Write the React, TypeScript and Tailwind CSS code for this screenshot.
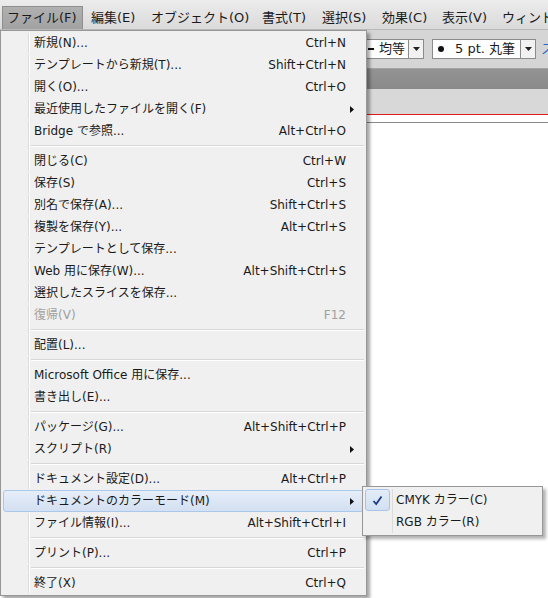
import React from 'react';

type Item = {
    label: string;
    shortcut?: string;
    sub?: boolean;
    disabled?: boolean;
    active?: boolean;
};

const groups: Item[][] = [
    [
        { label: '新規(N)...', shortcut: 'Ctrl+N' },
        { label: 'テンプレートから新規(T)...', shortcut: 'Shift+Ctrl+N' },
        { label: '開く(O)...', shortcut: 'Ctrl+O' },
        { label: '最近使用したファイルを開く(F)', sub: true },
        { label: 'Bridge で参照...', shortcut: 'Alt+Ctrl+O' },
    ],
    [
        { label: '閉じる(C)', shortcut: 'Ctrl+W' },
        { label: '保存(S)', shortcut: 'Ctrl+S' },
        { label: '別名で保存(A)...', shortcut: 'Shift+Ctrl+S' },
        { label: '複製を保存(Y)...', shortcut: 'Alt+Ctrl+S' },
        { label: 'テンプレートとして保存...' },
        { label: 'Web 用に保存(W)...', shortcut: 'Alt+Shift+Ctrl+S' },
        { label: '選択したスライスを保存...' },
        { label: '復帰(V)', shortcut: 'F12', disabled: true },
    ],
    [{ label: '配置(L)...' }],
    [
        { label: 'Microsoft Office 用に保存...' },
        { label: '書き出し(E)...' },
    ],
    [
        { label: 'パッケージ(G)...', shortcut: 'Alt+Shift+Ctrl+P' },
        { label: 'スクリプト(R)', sub: true },
    ],
    [
        { label: 'ドキュメント設定(D)...', shortcut: 'Alt+Ctrl+P' },
        { label: 'ドキュメントのカラーモード(M)', sub: true, active: true },
        { label: 'ファイル情報(I)...', shortcut: 'Alt+Shift+Ctrl+I' },
    ],
    [{ label: 'プリント(P)...', shortcut: 'Ctrl+P' }],
    [{ label: '終了(X)', shortcut: 'Ctrl+Q' }],
];

// label + column width in the menu bar
const menuBar: [string, string][] = [
    ['ファイル(F)', 'w-[84px]'],
    ['編集(E)', 'w-[60px]'],
    ['オブジェクト(O)', 'w-[111px]'],
    ['書式(T)', 'w-[60px]'],
    ['選択(S)', 'w-[60px]'],
    ['効果(C)', 'w-[60px]'],
    ['表示(V)', 'w-[60px]'],
    ['ウィンドウ(W)', 'w-[60px]'],
];

// Meiryo-like: Verdana-ish latin, CJK from Noto
const font = { fontFamily: '"DejaVu Sans", "Noto Sans CJK JP", sans-serif' };

function Arrow() {
    return (
        <svg width="4" height="7" viewBox="0 0 4 7">
            <path d="M0 0 L4 3.5 L0 7 Z" fill="#111" />
        </svg>
    );
}

function DropButton() {
    return (
        <div className="flex h-[20px] w-[15px] shrink-0 items-center justify-center border border-l-0 border-[#8b8b8b] bg-[#f2f2f2]">
            <svg width="7" height="4" viewBox="0 0 7 4"><path d="M0 0 H7 L3.5 4 Z" fill="#222" /></svg>
        </div>
    );
}

function MenuRow({ item }: { item: Item }) {
    return (
        <div
            className={
                'flex h-[22px] items-center ' +
                (item.active
                    ? 'rounded-[3px] border border-[#a9c8ea] bg-gradient-to-b from-[#e6eef9] to-[#d3e0f1]'
                    : 'border border-transparent')
            }
        >
            <div className={'h-full w-[25px] shrink-0 ' + (item.active ? '' : 'border-r border-[#dcdcdc] shadow-[1px_0_0_#ffffff]')} />
            <span className={'flex-1 pl-[5px] whitespace-nowrap ' + (item.disabled ? 'text-[#a0a0a0]' : 'text-[#1a1a1a]')}>
                {item.label}
            </span>
            {item.shortcut && (
                <span className={'whitespace-nowrap ' + (item.disabled ? 'text-[#a0a0a0]' : 'text-[#1a1a1a]')}>
                    {item.shortcut}
                </span>
            )}
            <div className="flex w-[17px] shrink-0 items-center pl-[4px]">{item.sub && <Arrow />}</div>
        </div>
    );
}

function Separator() {
    return (
        <div className="flex h-[8px] items-stretch">
            <div className="w-[26px] shrink-0 border-r border-[#dcdcdc] shadow-[1px_0_0_#ffffff]" />
            <div className="flex flex-1 flex-col justify-center pl-[2px]">
                <div className="h-px bg-[#d7d7d7]" />
                <div className="h-px bg-white" />
            </div>
        </div>
    );
}

export default function App() {
    return (
        <div className="relative h-[598px] w-[548px] overflow-hidden bg-white text-[12px]" style={font}>
            {/* Menu bar */}
            <div className="flex h-[30px] items-end overflow-hidden border-b border-[#b9b9b9] bg-gradient-to-b from-[#ececec] to-[#dadada] pl-[2px] text-[13px] text-[#1a1a1a]">
                {menuBar.map(([m, w], i) => (
                    <div key={m} className={'flex h-[23px] shrink-0 items-center ' + w}>
                        <div
                            className={
                                'flex h-full items-center whitespace-nowrap pl-[4px] ' +
                                (i === 0
                                    ? 'w-[81px] border border-b-0 border-[#8e8e8e] bg-gradient-to-b from-[#b0b0b0] to-[#a2a2a2]'
                                    : 'pl-[5px]')
                            }
                        >
                            {m}
                        </div>
                    </div>
                ))}
            </div>

            {/* Control bar */}
            <div className="flex h-[38px] items-center bg-[#d5d5d5] pl-[330px] text-[13px] text-[#1a1a1a] whitespace-nowrap">
                <div className="flex h-[20px] w-[79px] shrink-0 items-center border border-[#8b8b8b] bg-white pl-[37px]">
                    <span className="mr-[5px] h-[2px] w-[6px] shrink-0 bg-[#111]" />
                    <span>均等</span>
                </div>
                <DropButton />
                <div className="ml-[8px] flex h-[20px] w-[89px] shrink-0 items-center border border-[#8b8b8b] bg-white pl-[5px]">
                    <span className="mr-[11px] h-[6px] w-[6px] shrink-0 rounded-full bg-[#111]" />
                    <span>5 pt. 丸筆</span>
                </div>
                <DropButton />
                <span className="ml-[5px] text-[#2b63c8]">ス</span>
            </div>

            {/* Document tab area */}
            <div className="h-[21px] border-t border-[#a3a3a3] bg-gradient-to-b from-[#939393] to-[#8a8a8a]" />
            <div className="h-[25px] bg-[#d8d8d8]" />
            <div className="h-px bg-[#e01a1a]" />
            <div className="h-[7px] bg-white" />
            <div className="h-px bg-[#8a8a8a]" />

            {/* File menu */}
            <div className="absolute left-0 top-[30px] w-[367px] border border-[#979797] bg-[#f0f0f0] px-[2px] py-[1px] shadow-[3px_3px_3px_rgba(0,0,0,0.35)]">
                {groups.map((g, gi) => (
                    <React.Fragment key={gi}>
                        {gi > 0 && <Separator />}
                        {g.map((it) => (
                            <MenuRow key={it.label} item={it} />
                        ))}
                    </React.Fragment>
                ))}
            </div>

            {/* Color mode submenu */}
            <div className="absolute left-[362px] top-[486px] w-[181px] border border-[#979797] bg-[#f0f0f0] p-[2px] shadow-[3px_3px_3px_rgba(0,0,0,0.3)]">
                <div className="flex h-[22px] items-center">
                    <div className="flex h-[22px] w-[25px] shrink-0 items-center justify-center rounded-[3px] border border-[#a9c3e6] bg-gradient-to-b from-[#e3ecf8] to-[#d2e0f2]">
                        <svg width="11" height="11" viewBox="0 0 11 11">
                            <path d="M1.5 6 L4.2 9 L9.5 1.5" fill="none" stroke="#1f3a80" strokeWidth="1.8" />
                        </svg>
                    </div>
                    <div className="h-full w-[3px] shrink-0 border-r border-[#dcdcdc]" />
                    <span className="pl-[3px] text-[#1a1a1a]">CMYK カラー(C)</span>
                </div>
                <div className="flex h-[22px] items-center">
                    <div className="h-full w-[28px] shrink-0 border-r border-[#dcdcdc]" />
                    <span className="pl-[3px] text-[#1a1a1a]">RGB カラー(R)</span>
                </div>
            </div>
        </div>
    );
}
